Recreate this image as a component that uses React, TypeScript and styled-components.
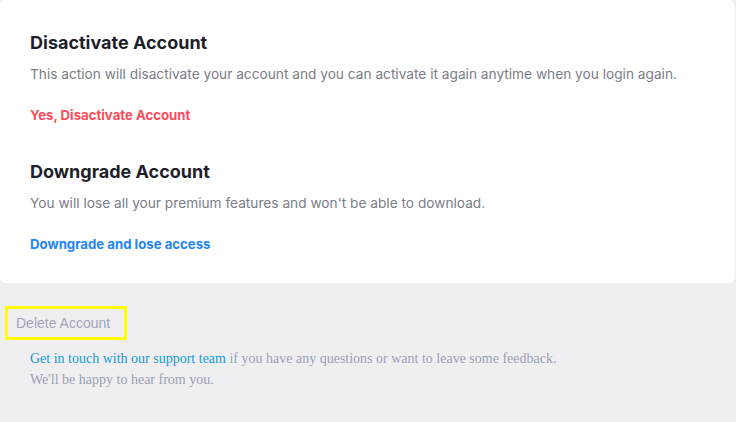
import React from "react";
import styled, { createGlobalStyle } from "styled-components";

const GlobalStyle = createGlobalStyle`
  html, body {
    margin: 0;
    padding: 0;
    background: #efeff1;
  }
  body {
    width: 736px;
    height: 422px;
    overflow: hidden;
  }
`;

const Page = styled.div`
  display: flex;
  flex-direction: column;
  width: 736px;
  height: 422px;
  background: #efeff1;
`;

const Card = styled.div`
  background: #ffffff;
  border-radius: 6px;
  width: 735px;
  height: 283px;
  box-sizing: border-box;
  padding: 32px 30px 0;
  font-family: Inter, "Noto Sans", sans-serif;
`;

const Section = styled.section`
  display: flex;
  flex-direction: column;
  margin-bottom: 37px;
`;

const Title = styled.h2`
  margin: 0;
  font-size: 18px;
  line-height: 22px;
  font-weight: 700;
  color: #1f1f2b;
`;

const Text = styled.p`
  margin: 11px 0 0;
  font-size: 13.7px;
  line-height: 18px;
  color: #7b7d87;
`;

const Action = styled.a<{ $tone: "danger" | "info" }>`
  margin-top: 23px;
  font-size: 13.2px;
  line-height: 18px;
  font-weight: 700;
  text-decoration: none;
  cursor: pointer;
  color: ${(p) => (p.$tone === "danger" ? "#ff4b59" : "#1f86f3")};
`;

const Footer = styled.div`
  display: flex;
  flex-direction: column;
  padding: 23px 5px 0;
`;

const DeleteLabel = styled.div`
  align-self: flex-start;
  box-sizing: border-box;
  width: 122px;
  height: 34px;
  border: 3px solid #ffff00;
  padding: 0 0 0 8px;
  display: flex;
  align-items: center;
  font-family: "Liberation Sans", Arial, sans-serif;
  font-size: 14px;
  color: #a2a5b7;
`;

const Help = styled.p`
  margin: 8px 0 0 25px;
  font-family: "Liberation Serif", "Times New Roman", serif;
  font-size: 14px;
  line-height: 21px;
  color: #9c9fb2;
`;

const HelpLink = styled.a`
  color: #1898d5;
  text-decoration: none;
`;

export default function App() {
  return (
    <Page>
      <GlobalStyle />
      <Card>
        <Section>
          <Title>Disactivate Account</Title>
          <Text>
            This action will disactivate your account and you can activate it
            again anytime when you login again.
          </Text>
          <Action $tone="danger">Yes, Disactivate Account</Action>
        </Section>
        <Section>
          <Title>Downgrade Account</Title>
          <Text>
            You will lose all your premium features and won't be able to
            download.
          </Text>
          <Action $tone="info">Downgrade and lose access</Action>
        </Section>
      </Card>
      <Footer>
        <DeleteLabel>Delete Account</DeleteLabel>
        <Help>
          <HelpLink>Get in touch with our support team</HelpLink> if you have
          any questions or want to leave some feedback.
          <br />
          We'll be happy to hear from you.
        </Help>
      </Footer>
    </Page>
  );
}
